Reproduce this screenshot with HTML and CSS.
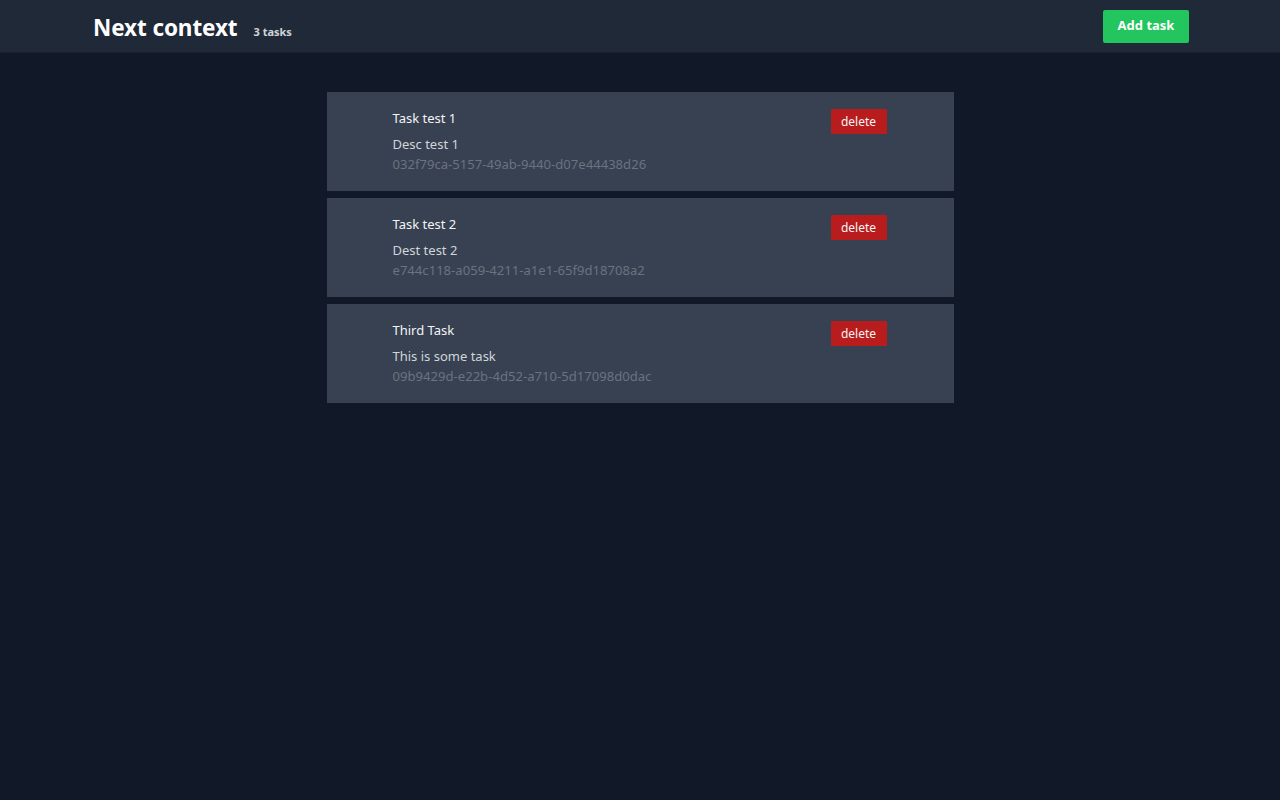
FILE: index.html
```html
<!DOCTYPE html>
<html lang="en">
<head>
<meta charset="utf-8">
<title>Next context</title>
<link rel="stylesheet" href="styles.css">
</head>
<body>
<header class="topbar">
  <div class="topbar-inner">
    <div class="brand">
      <h1 class="brand-title">Next context</h1>
      <span class="brand-count">3 tasks</span>
    </div>
    <button class="btn-add">Add task</button>
  </div>
</header>
<main class="tasks">
  <article class="task">
    <div class="task-body">
      <div class="task-title">Task test 1</div>
      <div class="task-desc">Desc test 1</div>
      <div class="task-id">032f79ca-5157-49ab-9440-d07e44438d26</div>
    </div>
    <button class="btn-delete">delete</button>
  </article>
  <article class="task">
    <div class="task-body">
      <div class="task-title">Task test 2</div>
      <div class="task-desc">Dest test 2</div>
      <div class="task-id">e744c118-a059-4211-a1e1-65f9d18708a2</div>
    </div>
    <button class="btn-delete">delete</button>
  </article>
  <article class="task">
    <div class="task-body">
      <div class="task-title">Third Task</div>
      <div class="task-desc">This is some task</div>
      <div class="task-id">09b9429d-e22b-4d52-a710-5d17098d0dac</div>
    </div>
    <button class="btn-delete">delete</button>
  </article>
</main>
</body>
</html>
```
FILE: styles.css
```css
* { box-sizing: border-box; }
html, body { margin: 0; padding: 0; }
body {
  background: #111827;
  min-height: 800px;
  font-family: "Noto Sans", sans-serif;
  color: #f9fafb;
}
.topbar {
  background: #1f2937;
  height: 53px;
  border-bottom: 1px solid #19212d;
}
.topbar-inner {
  height: 52px;
  padding: 0 91px 0 93px;
  display: flex;
  align-items: center;
  justify-content: space-between;
}
.brand { display: flex; align-items: baseline; gap: 16px; padding-top: 2px; }
.brand-title {
  margin: 0;
  font-size: 22.5px;
  font-weight: 700;
  color: #ffffff;
  letter-spacing: -0.1px;
}
.brand-count {
  font-size: 11px;
  font-weight: 700;
  color: #d1d5db;
}
.btn-add {
  width: 86px;
  height: 33px;
  border: 0;
  border-radius: 2px;
  background: #22c55e;
  color: #ffffff;
  font-family: inherit;
  font-size: 13px;
  font-weight: 700;
  padding: 0 0 3px;
  margin-top: 1px;
}
.tasks {
  width: 627px;
  margin: 39px auto 0;
  display: flex;
  flex-direction: column;
  gap: 7px;
}
.task {
  background: #374151;
  height: 99px;
  padding: 17px 67px 0 66px;
  display: flex;
  justify-content: space-between;
  align-items: flex-start;
}
.task-body { display: flex; flex-direction: column; }
.task-title { font-size: 13px; line-height: 18px; color: #f3f4f6; }
.task-desc { font-size: 13px; line-height: 20px; color: #d1d5db; margin-top: 7px; }
.task-id { font-size: 13.1px; line-height: 20px; color: #6b7280; }
.btn-delete {
  width: 56px;
  height: 25px;
  border: 0;
  border-radius: 1px;
  background: #b91c1c;
  color: #f3f4f6;
  font-family: inherit;
  font-size: 12px;
  padding: 0;
}
```
